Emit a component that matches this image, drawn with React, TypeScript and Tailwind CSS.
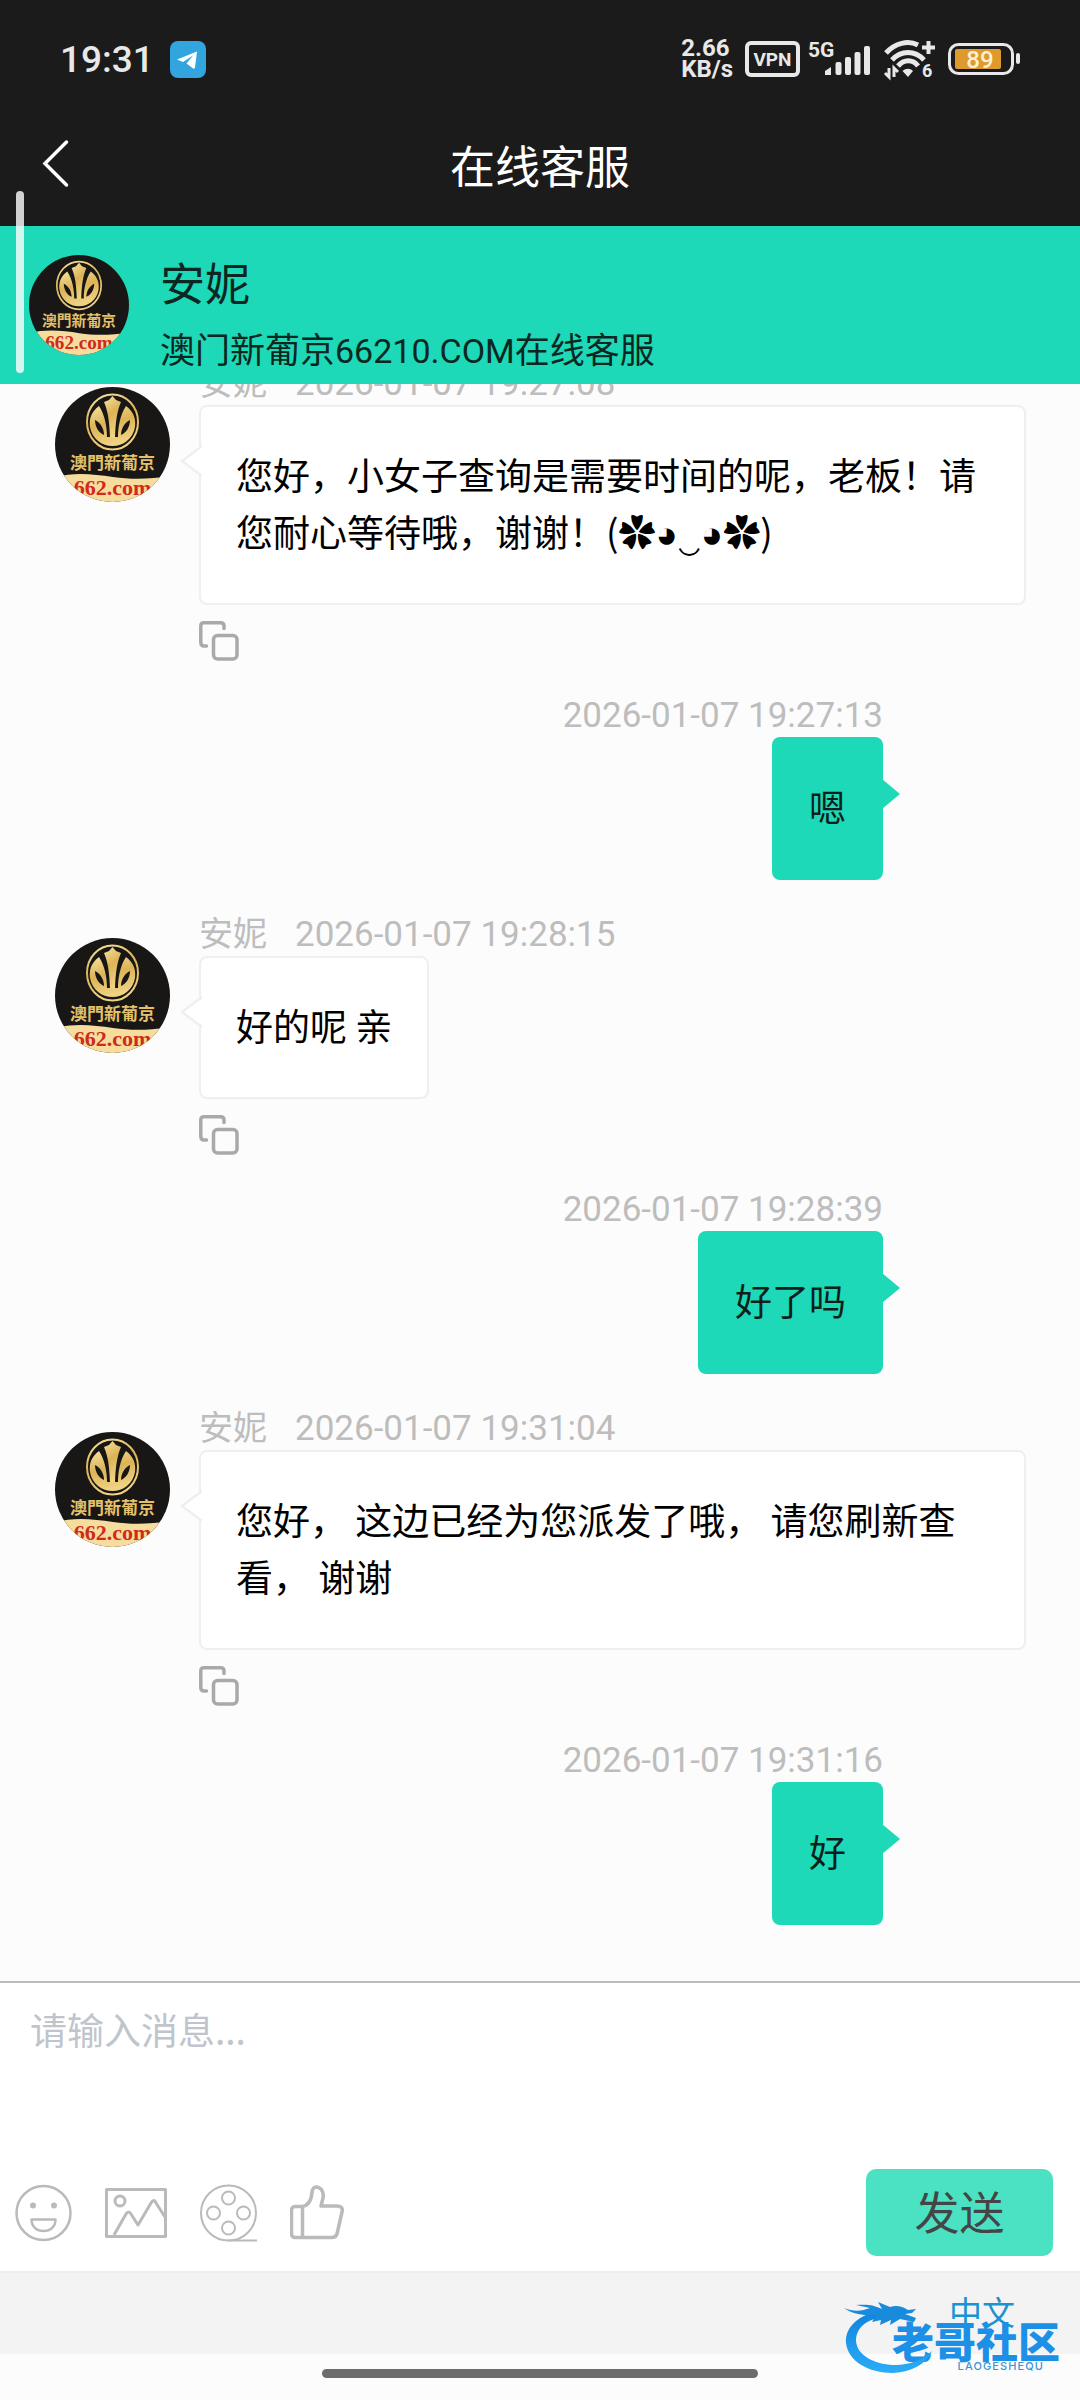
import React, { useId, useState } from 'react'

type Message = {
  id: number
  from: 'agent' | 'me'
  time: string
  text: string
}

const AGENT = '安妮'

const messages: Message[] = [
  { id: 1, from: 'agent', time: '2026-01-07 19:27:08', text: '您好，小女子查询是需要时间的呢，老板！请您耐心等待哦，谢谢！(✿◕‿◕✿)' },
  { id: 2, from: 'me', time: '2026-01-07 19:27:13', text: '嗯' },
  { id: 3, from: 'agent', time: '2026-01-07 19:28:15', text: '好的呢 亲' },
  { id: 4, from: 'me', time: '2026-01-07 19:28:39', text: '好了吗' },
  { id: 5, from: 'agent', time: '2026-01-07 19:31:04', text: '您好， 这边已经为您派发了哦， 请您刷新查看， 谢谢' },
  { id: 6, from: 'me', time: '2026-01-07 19:31:16', text: '好' },
]

const Avatar = ({ className = '' }: { className?: string }) => {
  const id = useId()
  const gold = `${id}-gold`
  const clip = `${id}-clip`
  return (
    <svg viewBox="0 0 115 115" className={`shrink-0 ${className}`} role="img" aria-label={AGENT}>
      <defs>
        <linearGradient id={gold} x1="0" y1="0" x2="0.3" y2="1">
          <stop offset="0" stopColor="#f6e3a0" />
          <stop offset="0.5" stopColor="#dcb356" />
          <stop offset="1" stopColor="#f0d283" />
        </linearGradient>
        <clipPath id={clip}>
          <circle cx="57.5" cy="57.5" r="57.5" />
        </clipPath>
      </defs>
      <g clipPath={`url(#${clip})`}>
        <rect width="115" height="115" fill="#181715" />
        <ellipse cx="57.5" cy="35" rx="25.5" ry="27.5" fill="none" stroke={`url(#${gold})`} strokeWidth="2" />
        <path
          d="M44 19C36 25 34 32 35 40C37 52 47 59 57.5 59C68 59 78 52 80 40C81 32 79 25 71 19C65 28 63 40 63 50H52C52 40 50 28 44 19Z"
          fill={`url(#${gold})`}
        />
        <path d="M57.5 9L61 13L66 15C62 24 60.500 35 60 51H55C54.500 35 53 24 49 15L54 13Z" fill={`url(#${gold})`} />
        <path d="M40 33C40 40 44 46 49 48C49 42 46 36 40 33ZM75 33C75 40 71 46 66 48C66 42 69 36 75 33Z" fill="#181715" />
        <text
          x="57.5"
          y="82"
          textAnchor="middle"
          fontSize="17"
          fontWeight="600"
          fontFamily='"Noto Sans CJK TC", sans-serif'
          fill="#e3c06a"
        >
          澳門新葡京
        </text>
        <path d="M0 90C20 85 38 87 58 90C78 93 96 92 115 89V115H0Z" fill="#f6dd9d" />
        <text
          x="57.5"
          y="108"
          textAnchor="middle"
          fontSize="22"
          fontWeight="700"
          fontFamily='"Liberation Serif", serif'
          fill="#cf2a1c"
        >
          662.com
        </text>
      </g>
    </svg>
  )
}

const StatusBar = () => (
  <div className="flex h-[106px] items-center justify-between pt-3 pr-[58px] pl-[60px] font-[Roboto,sans-serif] text-[#e8e8e8]">
    <div className="flex items-center gap-4">
      <span className="text-[37px] leading-none font-medium">19:31</span>
      <svg viewBox="0 0 36 37" className="h-[37px] w-9" aria-hidden="true">
        <rect width="36" height="37" rx="8" fill="#32a4de" />
        <path d="M7 18.500L27 10.500L25 26.500C24.700 28 23.500 28 22.500 27L16.500 22.500L23 14.500L13 21Z" fill="#fff" />
      </svg>
    </div>
    <div className="flex items-center gap-3">
      <div className="text-2xl leading-[21px] font-bold">
        <div>2.66</div>
        <div>KB/s</div>
      </div>
      <div className="flex h-9 w-[55px] items-center justify-center rounded-md border-4 border-[#e8e8e8] text-[19px] leading-none font-bold">
        VPN
      </div>
      <svg viewBox="0 0 64 38" className="-ml-1 h-[38px] w-16 overflow-visible" fill="currentColor" aria-hidden="true">
        <text x="0" y="17" fontSize="21" fontWeight="700">
          5G
        </text>
        <path d="M17 35V31L23 27V35Z" />
        <rect x="27.500" y="22" width="6" height="13" rx="2" />
        <rect x="37" y="17" width="6" height="18" rx="2" />
        <rect x="46.500" y="12" width="6" height="23" rx="2" />
        <rect x="56" y="6" width="6" height="29" rx="2" />
      </svg>
      <svg viewBox="0 0 52 38" className="h-[38px] w-[52px] overflow-visible" fill="none" stroke="currentColor" aria-hidden="true">
        <path d="M2 13C11 3 24 0 34 5" strokeWidth="5" />
        <path d="M8 20C17 10 31 10 40 20" strokeWidth="5" />
        <path d="M14 26C20 19 29 19 34 26" strokeWidth="5" />
        <path d="M18.500 31C22 28 26 28 29 31L24 37Z" fill="currentColor" stroke="none" />
        <path d="M38 7.500H51M44.500 1V14" strokeWidth="4" />
        <path d="M5 28V37L1 33M10 37V28L14 32" strokeWidth="3" />
        <text x="38" y="37" fontSize="18" fontWeight="700" fill="currentColor" stroke="none">
          6
        </text>
      </svg>
      <svg viewBox="0 0 74 34" className="h-[34px] w-[74px]" aria-hidden="true">
        <rect x="1.500" y="2.500" width="63" height="29" rx="9" fill="none" stroke="#e8e8e8" strokeWidth="3" />
        <rect x="7" y="7" width="46" height="20" rx="2" fill="#de9a2c" />
        <rect x="68" y="11" width="4" height="11" rx="2" fill="#e8e8e8" />
        <text x="32" y="26" fontSize="24" fontWeight="500" textAnchor="middle" fill="#fdf0d8">
          89
        </text>
      </svg>
    </div>
  </div>
)

const CopyIcon = () => (
  <svg viewBox="0 0 40 40" className="size-10" fill="none" stroke="#a9a9a9" strokeWidth="3.500" strokeLinecap="round">
    <rect x="14.500" y="14.500" width="23.500" height="23.500" rx="4" />
    <path d="M25 7.500V5Q25 1.800 21.500 1.800H5Q1.800 1.800 1.800 5V21Q1.800 25 5 25H7.500" />
  </svg>
)

const Time = ({ value }: { value: string }) => (
  <time className="pt-1 font-[Roboto,sans-serif] text-[35px] leading-none text-[#bdbdbd]">{value}</time>
)

const AgentMessage = ({ message }: { message: Message }) => (
  <div className="flex items-start gap-[29px] pr-[54px] pl-[55px]">
    <Avatar className="mt-[30px] size-[115px]" />
    <div className="min-w-0 flex-1">
      <div className="flex h-12 items-center gap-7">
        <span className="text-[34px] leading-none text-[#bdbdbd]">{AGENT}</span>
        <Time value={message.time} />
      </div>
      <div className="relative w-fit max-w-full rounded-lg border-2 border-[#efefef] bg-white px-[35px] pt-[39px] pb-[43px] text-[37px] leading-[57px] text-black">
        {message.text}
        <svg viewBox="0 0 22 32" className="absolute top-[38px] -left-[21px] h-8 w-[22px]" aria-hidden="true">
          <path d="M22 1L2 16L22 31" fill="#fff" stroke="#efefef" strokeWidth="2.500" />
        </svg>
      </div>
      <button type="button" aria-label="复制" className="mt-4 block">
        <CopyIcon />
      </button>
    </div>
  </div>
)

const MyMessage = ({ message }: { message: Message }) => (
  <div className="flex flex-col items-end pr-[197px] pl-[55px]">
    <div className="flex h-12 items-center">
      <Time value={message.time} />
    </div>
    <div className="relative rounded-lg bg-[#1dd9b7] px-[37px] pt-[41px] pb-[45px] text-[37px] leading-[57px] text-[#0c1f1b]">
      {message.text}
      <svg viewBox="0 0 18 30" className="absolute top-[42px] -right-[17px] h-[30px] w-[18px]" aria-hidden="true">
        <path d="M0 0L18 15L0 30Z" fill="#1dd9b7" />
      </svg>
    </div>
  </div>
)

const SmileIcon = () => (
  <svg viewBox="0 0 57 58" className="h-[58px] w-[57px]" fill="none" stroke="#bababa" strokeWidth="2.500">
    <circle cx="28.500" cy="29" r="27" />
    <circle cx="18" cy="21.500" r="3" fill="#bababa" stroke="none" />
    <circle cx="39" cy="21.500" r="3" fill="#bababa" stroke="none" />
    <path d="M16.500 35.500H40.500C40.500 43 35 47 28.500 47S16.500 43 16.500 35.500Z" strokeLinejoin="round" />
  </svg>
)

const ImageIcon = () => (
  <svg viewBox="0 0 62 50" className="h-[50px] w-[62px]" fill="none" stroke="#bababa" strokeWidth="3" strokeLinejoin="round">
    <rect x="1.500" y="1.500" width="59" height="47" />
    <circle cx="15" cy="13" r="5" />
    <path d="M9 47L21 26Q23.500 22 26 26L33 37L46 15Q49 10 51 15L60 29" />
  </svg>
)

const ReelIcon = () => (
  <svg viewBox="0 0 57 58" className="h-[58px] w-[57px]" fill="none" stroke="#bababa" strokeWidth="2">
    <circle cx="28.500" cy="29" r="27.500" />
    <circle cx="28.500" cy="14" r="6.500" />
    <circle cx="13.500" cy="29" r="6.500" />
    <circle cx="43.500" cy="29" r="6.500" />
    <circle cx="28.500" cy="44" r="6.500" />
    <path d="M28 56.500H57" />
  </svg>
)

const ThumbIcon = () => (
  <svg viewBox="0 0 54 55" className="h-[55px] w-[54px]" fill="none" stroke="#bababa" strokeWidth="3.500" strokeLinejoin="round">
    <path d="M5 21.500H12C18 21 21 16 22 8C22 4 24 1.500 27 2C32 3 34 8 33 13L31 21H47C51 21 53 23 52 27L47 49C46 51.500 45 52.500 42 52.500H5C3 52.500 1.500 51 1.500 49V25C1.500 23 3 21.500 5 21.500ZM12.500 22V52" />
  </svg>
)

const tools = [
  { label: '表情', icon: <SmileIcon /> },
  { label: '图片', icon: <ImageIcon /> },
  { label: '视频', icon: <ReelIcon /> },
  { label: '评价', icon: <ThumbIcon /> },
]

const Watermark = () => (
  <div className="pointer-events-none absolute right-4 bottom-[26px] h-[76px] w-[224px]">
    <svg viewBox="0 0 224 76" className="absolute inset-0 size-full" aria-hidden="true">
      <defs>
        <linearGradient id="dragon" x1="0" y1="0" x2="0" y2="1">
          <stop offset="0" stopColor="#0f84dd" />
          <stop offset="1" stopColor="#2bacf8" />
        </linearGradient>
      </defs>
      <path
        d="M34 14C14 20 5 32 6 45C8 63 28 75 53 75C72 74 86 66 92 53C82 62 69 67 56 67C34 67 17 57 16 43C16 31 25 22 40 20Z"
        fill="url(#dragon)"
      />
      <path
        d="M4 10C14 14 22 13 30 10L16 7C28 6 34 7 42 11L38 4L50 9C56 7 62 8 68 12L76 11L72 15L65 16L76 20L74 24L60 21L50 27L51 22L40 27L41 22L32 24L36 17C24 18 12 16 4 10Z"
        fill="#198bdd"
      />
    </svg>
    <div className="flex h-full flex-col items-end justify-end pr-1">
      <div className="text-[42px] leading-[36px] font-black whitespace-nowrap text-[#1b90e6]">老哥社区</div>
      <div className="pr-4 font-[Inter,sans-serif] text-[11px] leading-[16px] font-medium tracking-widest text-[#3b93d8]">
        LAOGESHEQU
      </div>
    </div>
  </div>
)

export default function App() {
  const [draft, setDraft] = useState('')

  return (
    <div className="relative flex h-screen flex-col overflow-hidden bg-[#fcfcfc] font-['Noto_Sans_CJK_SC',sans-serif]">
      <div className="bg-[#1b1b1b]">
        <StatusBar />
        <nav className="relative flex h-[120px] items-center justify-center pb-1">
          <button type="button" aria-label="返回" className="absolute left-[42px]">
            <svg viewBox="0 0 28 50" className="h-[50px] w-7" fill="none" stroke="#fff" strokeWidth="3.500" strokeLinecap="round">
              <path d="M24.500 3L3 24.500L24.500 46" />
            </svg>
          </button>
          <h1 className="text-[45px] leading-none text-white">在线客服</h1>
        </nav>
      </div>

      <header className="flex h-[158px] items-center gap-[31px] bg-[#1dd9b7] pl-[29px] text-[#0c2722]">
        <Avatar className="size-[100px]" />
        <div className="pt-4">
          <div className="text-[45px] leading-[72px]">{AGENT}</div>
          <div className="text-[35px] leading-[60px]">
            澳门新葡京<span className="font-[Roboto,sans-serif] text-[34px]">66210.COM</span>在线客服
          </div>
        </div>
      </header>
      <div className="absolute top-[191px] left-4 h-[182px] w-2 rounded-full bg-white/80" />

      <main className="flex min-h-0 flex-1 flex-col justify-end gap-7 overflow-hidden pb-14">
        {messages.map((m) => (m.from === 'agent' ? <AgentMessage key={m.id} message={m} /> : <MyMessage key={m.id} message={m} />))}
      </main>

      <form className="border-t-2 border-[#bcbcbc] bg-white pb-[15px]" onSubmit={(e) => e.preventDefault()}>
        <textarea
          aria-label="请输入消息"
          value={draft}
          onChange={(e) => setDraft(e.target.value)}
          placeholder="请输入消息..."
          className="block h-[186px] w-full resize-none px-[30px] pt-[18px] text-[37px] leading-[57px] text-black outline-none placeholder:text-[#c0c4cc]"
        />
        <div className="flex items-center justify-between pr-[27px] pl-[15px]">
          <div className="flex items-center gap-[33px]">
            {tools.map((t) => (
              <button key={t.label} type="button" aria-label={t.label}>
                {t.icon}
              </button>
            ))}
          </div>
          <button type="submit" className="h-[87px] w-[187px] rounded-[10px] bg-[#4ae2c3] pb-1 text-[45px] leading-none text-[#454545]">
            发送
          </button>
        </div>
      </form>

      <footer className="flex h-[83px] items-center justify-end border-t-2 border-[#eceef0] bg-[#f3f3f3] pr-[65px] pb-1">
        <a href="#lang" className="text-[33px] leading-none text-[#1a93d1]">
          中文
        </a>
      </footer>
      <div className="flex h-[46px] items-center justify-center pb-2">
        <div className="h-[9px] w-[436px] rounded-full bg-[#6c6c6c]" />
      </div>
      <Watermark />
    </div>
  )
}
